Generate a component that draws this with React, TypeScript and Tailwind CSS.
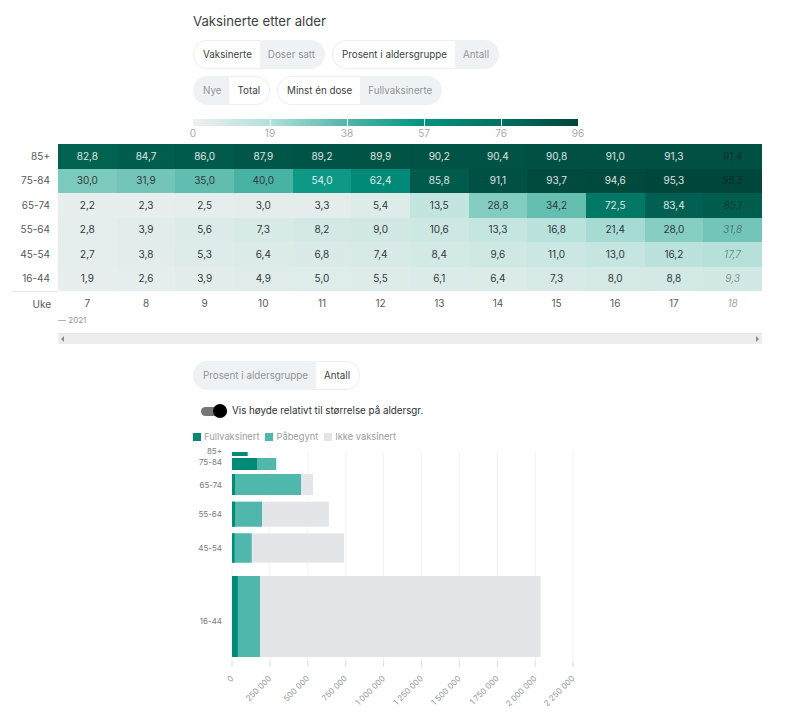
import React from "react";

const weeks = [7, 8, 9, 10, 11, 12, 13, 14, 15, 16, 17, 18];

const rows: { label: string; values: number[] }[] = [
  { label: "85+", values: [82.8, 84.7, 86.0, 87.9, 89.2, 89.9, 90.2, 90.4, 90.8, 91.0, 91.3, 91.4] },
  { label: "75-84", values: [30.0, 31.9, 35.0, 40.0, 54.0, 62.4, 85.8, 91.1, 93.7, 94.6, 95.3, 95.5] },
  { label: "65-74", values: [2.2, 2.3, 2.5, 3.0, 3.3, 5.4, 13.5, 28.8, 34.2, 72.5, 83.4, 85.1] },
  { label: "55-64", values: [2.8, 3.9, 5.6, 7.3, 8.2, 9.0, 10.6, 13.3, 16.8, 21.4, 28.0, 31.8] },
  { label: "45-54", values: [2.7, 3.8, 5.3, 6.4, 6.8, 7.4, 8.4, 9.6, 11.0, 13.0, 16.2, 17.7] },
  { label: "16-44", values: [1.9, 2.6, 3.9, 4.9, 5.0, 5.5, 6.1, 6.4, 7.3, 8.0, 8.8, 9.3] },
];

// fargeskala for varmekartet
const stops: [number, number[]][] = [
  [0, [238, 240, 240]],
  [19, [178, 224, 217]],
  [30, [124, 202, 189]],
  [38, [80, 181, 167]],
  [57, [0, 148, 128]],
  [76, [1, 112, 95]],
  [96, [0, 70, 58]],
];

function cellColor(v: number) {
  for (let i = 1; i < stops.length; i++) {
    const [b, cb] = stops[i];
    const [a, ca] = stops[i - 1];
    if (v <= b) {
      const t = (v - a) / (b - a);
      return `rgb(${ca.map((c, k) => Math.round(c + (cb[k] - c) * t)).join(",")})`;
    }
  }
  return "rgb(0,70,58)";
}

const fmt = (v: number) => v.toFixed(1).replace(".", ",");

const Toggle: React.FC<{ left: string; right: string; active: "left" | "right" }> = ({ left, right, active }) => {
  const on = "bg-white text-[#3a3f44] border border-[#eceff1]";
  const off = "bg-[#eff2f4] text-[#8f9499] border border-[#eff2f4]";
  return (
    <div className="flex h-[29px] text-[9.8px] leading-none">
      <div className={`flex items-center pl-[9px] pr-[8px] rounded-l-full border-r-0 ${active === "left" ? on : off}`}>{left}</div>
      <div className={`flex items-center pl-[8px] pr-[9px] rounded-r-full border-l-0 ${active === "right" ? on : off}`}>{right}</div>
    </div>
  );
};

const Heatmap: React.FC = () => (
  <div className="mt-[5px]">
    <div className="grid grid-cols-[58px_repeat(12,58.67px)]">
      {rows.map((r) => (
        <React.Fragment key={r.label}>
          <div className="h-[24.5px] flex items-center justify-end pr-[8px] text-[10px] text-[#55595e]">{r.label}</div>
          {r.values.map((v, i) => {
            const last = i === 11;
            const textColor = last ? "text-black/40 italic" : v > 50 ? "text-white/85" : "text-[#33383c]";
            return (
              <div
                key={i}
                className={`h-[24.5px] flex items-center justify-center text-[10px] ${textColor}`}
                style={{ backgroundColor: cellColor(v) }}
              >
                {fmt(v)}
              </div>
            );
          })}
        </React.Fragment>
      ))}
      <div className="h-[25px] ml-[11px] border-t border-[#e6e8ea] flex items-center justify-end pr-[7px] text-[10px] text-[#55595e]">Uke</div>
      {weeks.map((w) => (
        <div key={w} className={`h-[25px] flex items-center justify-center text-[10px] ${w === 18 ? "italic text-[#a3a6a9]" : "text-[#55595e]"}`}>
          {w}
        </div>
      ))}
    </div>
    <div className="ml-[58px] mt-[-3px] h-[14px] text-[8px] leading-[14px] text-[#8f9499]">— 2021</div>
    <div className="ml-[58px] w-[704px] mt-[6px] h-[11px] bg-[#ededed] border-t border-[#e4e4e4] flex items-center justify-between px-[3px]">
      <span className="w-0 h-0 border-y-[3px] border-y-transparent border-r-[3px] border-r-[#8a8a8a]" />
      <span className="w-0 h-0 border-y-[3px] border-y-transparent border-l-[3px] border-l-[#8a8a8a]" />
    </div>
  </div>
);

const ticks = ["0", "250 000", "500 000", "750 000", "1 000 000", "1 250 000", "1 500 000", "1 750 000", "2 000 000", "2 250 000"];

const bars = [
  { label: "85+", y: 9, h: 4, a: 247, b: 248, c: 248.5, dy: -3 },
  { label: "75-84", y: 15, h: 12, a: 257, b: 276, c: 277.5, dy: -2 },
  { label: "65-74", y: 31, h: 21, a: 235, b: 301, c: 313, dy: 0 },
  { label: "55-64", y: 58.7, h: 25, a: 235, b: 262, c: 329, dy: 0 },
  { label: "45-54", y: 90.3, h: 29.4, a: 234.5, b: 251.7, c: 344, dy: 0 },
  { label: "16-44", y: 133, h: 81, a: 237.7, b: 260, c: 540.7, dy: 4 },
];

// diagrammet tegnes i sidekoordinater x, forskjøvet med 193
const BarChart: React.FC = () => (
  <svg width="400" height="277" className="block">
    {ticks.map((t, i) => {
      const x = 232 + i * 37.9 - 193;
      return (
        <g key={t}>
          <line x1={x} x2={x} y1={9} y2={224} stroke="#f0f1f2" strokeWidth="1" />
          <line x1={x} x2={x} y1={218} y2={224} stroke="#e0e2e4" strokeWidth="1" />
          <text
            x={x + 2}
            y={236}
            textAnchor="end"
            fontSize="8"
            fill="#8f9499"
            transform={`rotate(-45 ${x + 2} 236)`}
          >
            {t}
          </text>
        </g>
      );
    })}
    {bars.map((b) => (
      <g key={b.label}>
        <rect x={232 - 193} y={b.y} width={b.c - 232} height={b.h} fill="#e3e5e9" />
        <rect x={232 - 193} y={b.y} width={b.b - 232} height={b.h} fill="#4fb7ab" />
        <rect x={232 - 193} y={b.y} width={b.a - 232} height={b.h} fill="#008a77" />
        <text x={29} y={b.y + b.h / 2 + 3 + b.dy} textAnchor="end" fontSize="8" fill="#777b80">
          {b.label}
        </text>
      </g>
    ))}
  </svg>
);

const App: React.FC = () => (
  <div className="w-[791px] h-[720px] overflow-hidden bg-white font-['Inter',sans-serif]">
    <div className="pl-[193px] pt-[13px]">
      <h1 className="text-[13.2px] leading-[17px] font-normal text-[#3a3f44]">Vaksinerte etter alder</h1>
      <div className="flex gap-[7px] mt-[10px]">
        <Toggle left="Vaksinerte" right="Doser satt" active="left" />
        <Toggle left="Prosent i aldersgruppe" right="Antall" active="left" />
      </div>
      <div className="flex gap-[7px] mt-[7px]">
        <Toggle left="Nye" right="Total" active="right" />
        <Toggle left="Minst én dose" right="Fullvaksinerte" active="left" />
      </div>
      <div className="w-[385px] mt-[14px]">
        <div className="relative h-[7px] bg-[linear-gradient(to_right,#eef0f0,#b2e0d9_20%,#50b5a7_40%,#009480_60%,#01705f_80%,#00463a)]">
          <span className="absolute left-[19.9%] top-0 h-full w-px bg-white" />
          <span className="absolute left-[39.9%] top-0 h-full w-px bg-white" />
          <span className="absolute left-[59.9%] top-0 h-full w-px bg-white" />
          <span className="absolute left-[80%] top-0 h-full w-px bg-white" />
        </div>
        <div className="flex justify-between text-[10px] leading-[11px] mt-[2px] text-[#a6a9ad]">
          {["0", "19", "38", "57", "76", "96"].map((l) => (
            <span key={l} className="w-0 flex justify-center">{l}</span>
          ))}
        </div>
      </div>
    </div>
    <Heatmap />
    <div className="pl-[193px] mt-[17px]">
      <Toggle left="Prosent i aldersgruppe" right="Antall" active="right" />
      <div className="flex items-center gap-[5px] mt-[13px] ml-[8px] h-[16px]">
        <div className="relative w-[26px] h-[9px] rounded-full bg-[#777]">
          <span className="absolute right-0 top-[-3px] w-[14px] h-[14px] rounded-full bg-black" />
        </div>
        <span className="text-[9.8px] text-[#2c2f33]">Vis høyde relativt til størrelse på aldersgr.</span>
      </div>
      <div className="flex items-center gap-[6px] mt-[11px] h-[13px] text-[9.3px] text-[#9a9da1]">
        <span className="flex items-center gap-[3px]"><i className="block w-[8px] h-[8px] bg-[#008a77]" />Fullvaksinert</span>
        <span className="flex items-center gap-[3px]"><i className="block w-[8px] h-[8px] bg-[#4fb7ab]" />Påbegynt</span>
        <span className="flex items-center gap-[3px]"><i className="block w-[8px] h-[8px] bg-[#e3e5e9]" />Ikke vaksinert</span>
      </div>
      <BarChart />
    </div>
  </div>
);

export default App;
